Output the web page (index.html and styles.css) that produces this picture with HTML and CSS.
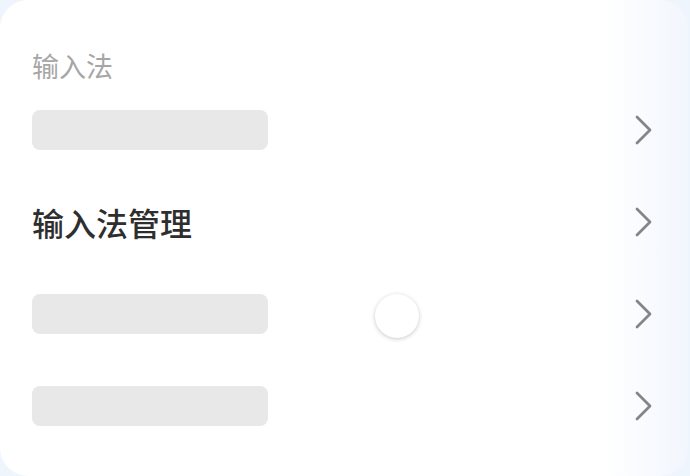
FILE: index.html
```html
<!DOCTYPE html>
<html lang="zh-CN">
<head>
<meta charset="utf-8">
<link rel="stylesheet" href="styles.css">
</head>
<body>
<div class="card">
  <div class="section-title">输入法</div>
  <div class="row">
    <div class="placeholder"></div>
    <svg class="chev" viewBox="0 0 20 32" width="20" height="32"><path d="M3 3 L16 16 L3 29" /></svg>
  </div>
  <div class="row">
    <div class="label">输入法管理</div>
    <svg class="chev" viewBox="0 0 20 32" width="20" height="32"><path d="M3 3 L16 16 L3 29" /></svg>
  </div>
  <div class="row">
    <div class="placeholder"></div>
    <svg class="chev" viewBox="0 0 20 32" width="20" height="32"><path d="M3 3 L16 16 L3 29" /></svg>
  </div>
  <div class="row">
    <div class="placeholder"></div>
    <svg class="chev" viewBox="0 0 20 32" width="20" height="32"><path d="M3 3 L16 16 L3 29" /></svg>
  </div>
  <div class="touch"></div>
</div>
</body>
</html>
```
FILE: styles.css
```css
html, body {
  margin: 0;
  padding: 0;
}
body {
  width: 690px;
  height: 476px;
  background: #eef5fd;
  overflow: hidden;
  font-family: "Noto Sans CJK SC", "Noto Sans", sans-serif;
}
.card {
  position: relative;
  box-sizing: border-box;
  width: 688px;
  height: 476px;
  border-radius: 28px;
  background: linear-gradient(to right, #ffffff 0%, #ffffff 88%, #f6f9fe 96%, #f2f7fd 100%);
  padding: 0 37px 0 32px;
}
.section-title {
  height: 84px;
  box-sizing: border-box;
  padding-top: 47px;
  display: flex;
  align-items: center;
  font-size: 27px;
  line-height: 36px;
  color: #a6a6a6;
}
.row {
  height: 92px;
  display: flex;
  align-items: center;
  justify-content: space-between;
}
.placeholder {
  width: 236px;
  height: 40px;
  border-radius: 8px;
  background: #e8e8e8;
}
.label {
  font-size: 32px;
  line-height: 40px;
  font-weight: 500;
  color: #2e2e2e;
}
.chev {
  display: block;
  margin-right: -3px;
}
.chev path {
  fill: none;
  stroke: #858585;
  stroke-width: 2.8;
  stroke-linecap: round;
  stroke-linejoin: round;
}
.touch {
  position: absolute;
  left: 375px;
  top: 294px;
  width: 44px;
  height: 44px;
  border-radius: 50%;
  background: #ffffff;
  box-shadow: 0 1px 4px rgba(0, 0, 0, 0.22);
}
```
